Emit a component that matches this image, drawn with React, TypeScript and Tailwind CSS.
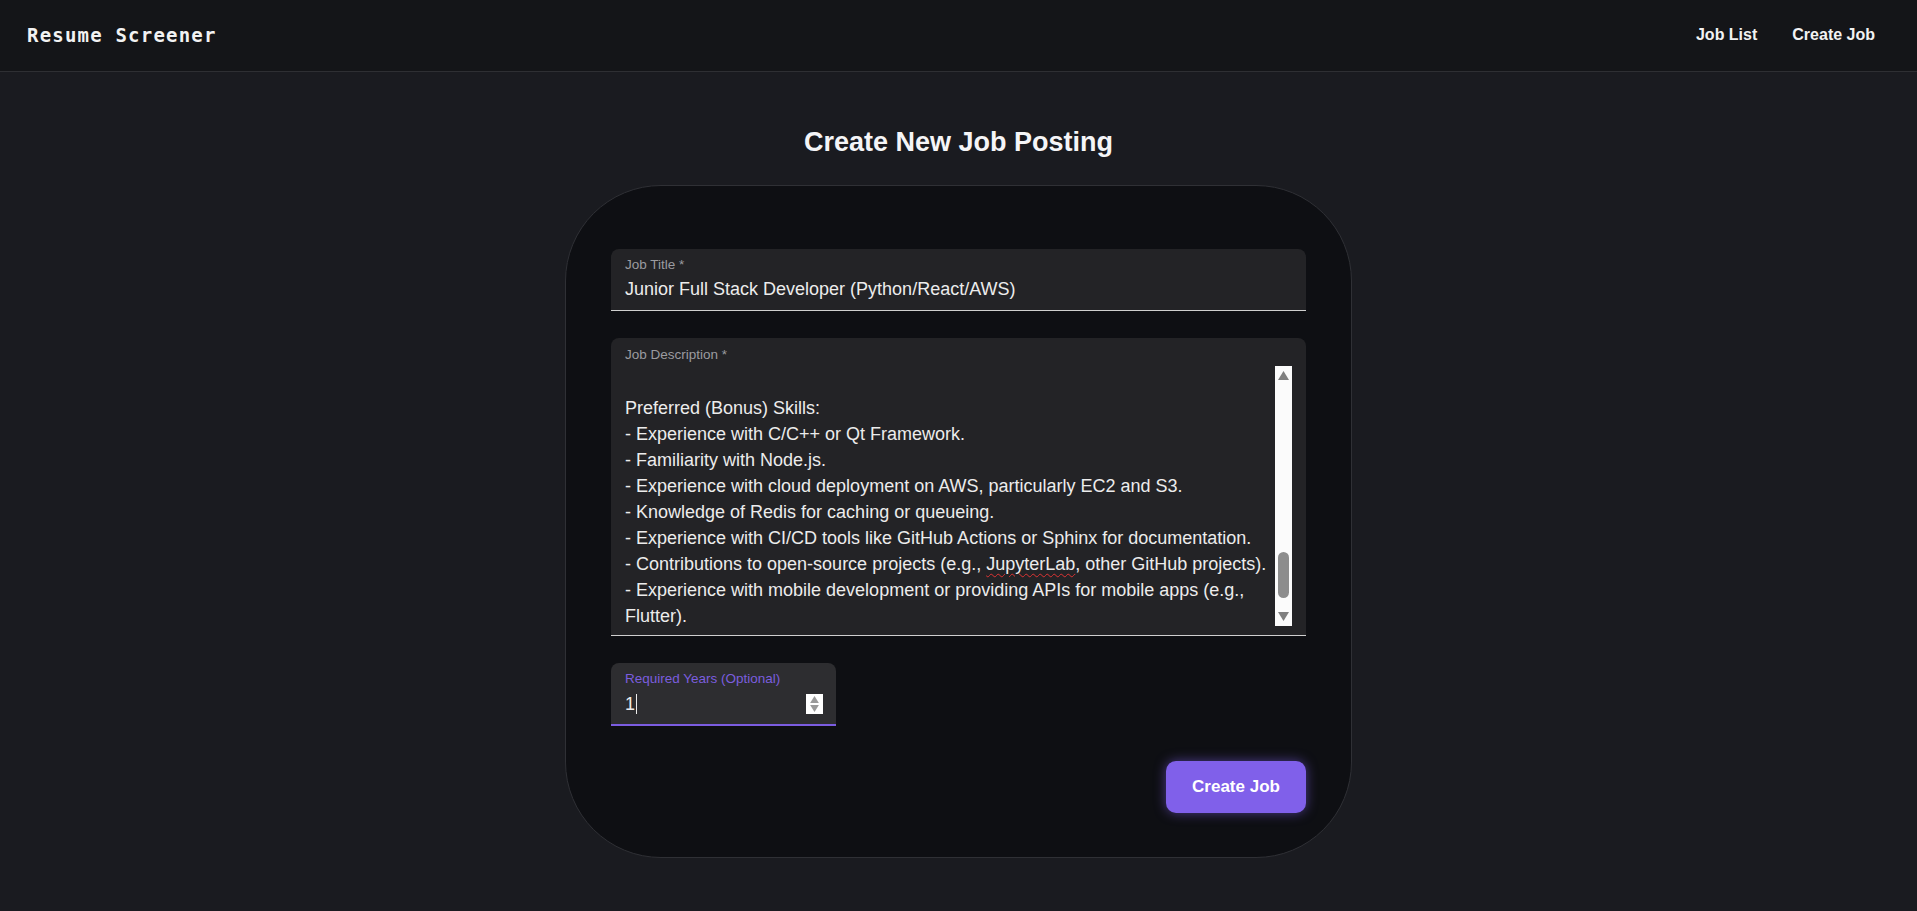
import React from 'react';

// only the tail of the description is visible in the textarea
const descriptionLines: string[] = [
  '',
  'Preferred (Bonus) Skills:',
  '- Experience with C/C++ or Qt Framework.',
  '- Familiarity with Node.js.',
  '- Experience with cloud deployment on AWS, particularly EC2 and S3.',
  '- Knowledge of Redis for caching or queueing.',
  '- Experience with CI/CD tools like GitHub Actions or Sphinx for documentation.',
];

// little triangles used by the native-looking scrollbar / spinner
const Triangle = ({ dir, className }: { dir: 'up' | 'down'; className?: string }) => (
  <svg viewBox="0 0 10 8" className={className} fill="currentColor">
    {dir === 'up' ? <path d="M5 0 L10 8 L0 8 Z" /> : <path d="M0 0 L10 0 L5 8 Z" />}
  </svg>
);

const App: React.FC = () => {
  return (
    <div className="min-h-screen bg-[#1a1b20] font-['Liberation_Sans',Arial,sans-serif] text-white">
      {/* Header */}
      <header className="h-[72px] bg-[#141518] border-b border-[#2e2f33] flex items-center justify-between pl-[27px] pr-[42px]">
        <div className="font-['DejaVu_Sans_Mono',monospace] font-bold text-[19px] tracking-[1.2px] text-[#f2f2f2]">
          Resume Screener
        </div>
        <nav className="flex items-center gap-[35px] text-[16px] font-bold text-[#f2f2f2] -mt-[1px]">
          <span>Job List</span>
          <span>Create Job</span>
        </nav>
      </header>

      <main className="flex flex-col items-center pt-[55px]">
        <h1 className="text-[27px] leading-[31px] font-bold text-[#f5f5f7]">Create New Job Posting</h1>

        <div className="mt-[27px] w-[787px] rounded-[96px] border border-[#2f3035] bg-[#0e0f13] pt-[63px] px-[45px] pb-[44px]">
          {/* Job Title */}
          <div className="rounded-t-[8px] bg-[#232326] border-b border-[#cfcfcf] pt-[9px] px-[14px] pb-[8px]">
            <div className="text-[13.5px] leading-[14px] text-[#9b9ba0]">Job Title *</div>
            <div className="mt-[4px] text-[18px] leading-[26px] text-[#ececec]">
              Junior Full Stack Developer (Python/React/AWS)
            </div>
          </div>

          {/* Job Description */}
          <div className="mt-[27px] rounded-t-[8px] bg-[#232326] border-b border-[#cfcfcf] pt-[10px] pl-[14px] pr-[14px] pb-[6px]">
            <div className="text-[13.5px] leading-[14px] text-[#9b9ba0]">Job Description *</div>
            <div className="relative mt-[7px] h-[260px]">
              <div className="h-full overflow-hidden flex flex-col justify-end pr-[20px] text-[18px] leading-[26px] text-[#ececec]">
                {descriptionLines.map((line, i) => (
                  <div key={i} className="whitespace-nowrap min-h-[26px]">{line}</div>
                ))}
                <div className="whitespace-nowrap">
                  - Contributions to open-source projects (e.g.,{' '}
                  <span className="underline decoration-wavy decoration-[#d33] decoration-1 underline-offset-[3px]">JupyterLab</span>
                  , other GitHub projects).
                </div>
                <div className="whitespace-nowrap">- Experience with mobile development or providing APIs for mobile apps (e.g.,</div>
                <div className="whitespace-nowrap">Flutter).</div>
              </div>

              {/* scrollbar */}
              <div className="absolute right-0 top-[-3px] w-[17px] h-[260px] bg-[#fbfbfb] flex flex-col items-center justify-between py-[5px]">
                <Triangle dir="up" className="w-[11px] h-[9px] text-[#7f7f7f]" />
                <div className="flex-1 w-full flex flex-col justify-end items-center pb-[14px]">
                  <div className="w-[11px] h-[46px] rounded-full bg-[#8d8d8d]" />
                </div>
                <Triangle dir="down" className="w-[11px] h-[9px] text-[#7f7f7f]" />
              </div>
            </div>
          </div>

          {/* Required Years */}
          <div className="mt-[27px] w-[225px] rounded-t-[8px] bg-[#2d2d30] border-b-2 border-[#7b5ce0] pt-[9px] pl-[14px] pr-[13px] pb-[7px]">
            <div className="text-[13.5px] leading-[14px] text-[#7b5ddf]">Required Years (Optional)</div>
            <div className="mt-[5px] flex items-center justify-between h-[26px]">
              <div className="flex items-center text-[18px] leading-[26px] text-[#ececec]">
                1<span className="ml-[1px] w-px h-[20px] bg-[#ececec]" />
              </div>
              <div className="w-[17px] h-[20px] bg-white flex flex-col items-center justify-center gap-[2px]">
                <Triangle dir="up" className="w-[9px] h-[7px] text-[#9a9a9a]" />
                <Triangle dir="down" className="w-[9px] h-[7px] text-[#9a9a9a]" />
              </div>
            </div>
          </div>

          {/* Submit */}
          <div className="mt-[35px] flex justify-end">
            <button className="w-[140px] h-[52px] rounded-[10px] bg-[#8060ea] text-[17px] font-bold text-white shadow-[0_0_12px_rgba(128,96,234,0.55)]">
              Create Job
            </button>
          </div>
        </div>
      </main>
    </div>
  );
};

export default App;
